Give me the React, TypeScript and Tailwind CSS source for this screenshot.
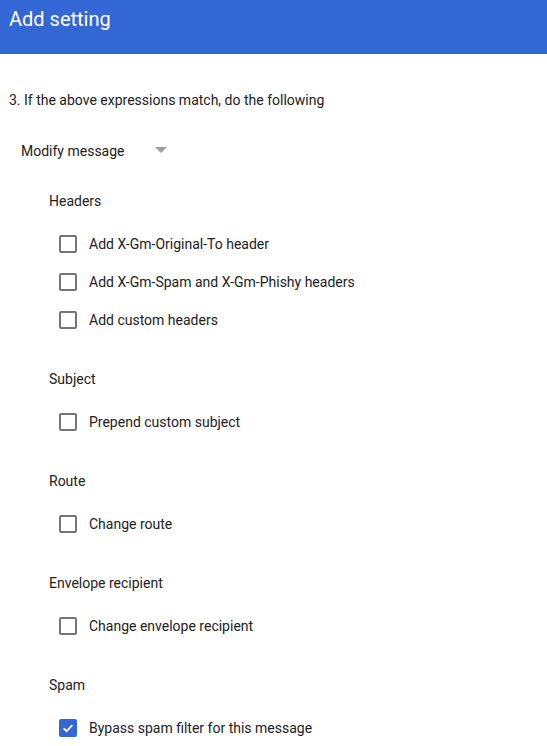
import React from "react";

const sections: { title: string; items: { label: string; checked?: boolean }[] }[] = [
  {
    title: "Headers",
    items: [
      { label: "Add X-Gm-Original-To header" },
      { label: "Add X-Gm-Spam and X-Gm-Phishy headers" },
      { label: "Add custom headers" },
    ],
  },
  { title: "Subject", items: [{ label: "Prepend custom subject" }] },
  { title: "Route", items: [{ label: "Change route" }] },
  { title: "Envelope recipient", items: [{ label: "Change envelope recipient" }] },
  { title: "Spam", items: [{ label: "Bypass spam filter for this message", checked: true }] },
];

function Checkbox({ checked }: { checked?: boolean }) {
  if (checked) {
    return (
      <div className="w-[18px] h-[18px] rounded-[2px] bg-[#3367d6] flex items-center justify-center">
        <svg width="14" height="14" viewBox="0 0 24 24" fill="none">
          <path d="M4.5 12.5l5 5L19.5 7" stroke="white" strokeWidth="3" />
        </svg>
      </div>
    );
  }
  return <div className="w-[18px] h-[18px] rounded-[2px] border-2 border-[#757575]" />;
}

export default function App() {
  return (
    <div className="w-[547px] h-[746px] overflow-hidden bg-white font-['Roboto',sans-serif] text-[14px] text-[#212121]">
      <div className="h-[54px] bg-[#3367d6] px-[9px] pt-[5px]">
        <h1 className="text-white text-[20px] leading-[28px]">Add setting</h1>
      </div>

      <div className="pt-[36px] pl-[9px]">
        <p className="leading-[20px]">3. If the above expressions match, do the following</p>

        <div className="mt-[31px] ml-[12px] flex items-center h-[20px]">
          <span>Modify message</span>
          <span className="ml-[30px] w-0 h-0 border-l-[6px] border-r-[6px] border-t-[6px] border-l-transparent border-r-transparent border-t-[#9e9e9e] mb-[3px]" />
        </div>

        <div className="ml-[40px] mt-[30px] flex flex-col gap-[40px]">
          {sections.map((s) => (
            <div key={s.title}>
              <div className="leading-[20px]">{s.title}</div>
              <div className="mt-[24px] ml-[10px] flex flex-col gap-[20px]">
                {s.items.map((it) => (
                  <label key={it.label} className="flex items-center gap-[12px] h-[18px]">
                    <Checkbox checked={it.checked} />
                    <span className="leading-[20px]">{it.label}</span>
                  </label>
                ))}
              </div>
            </div>
          ))}
        </div>
      </div>
    </div>
  );
}
